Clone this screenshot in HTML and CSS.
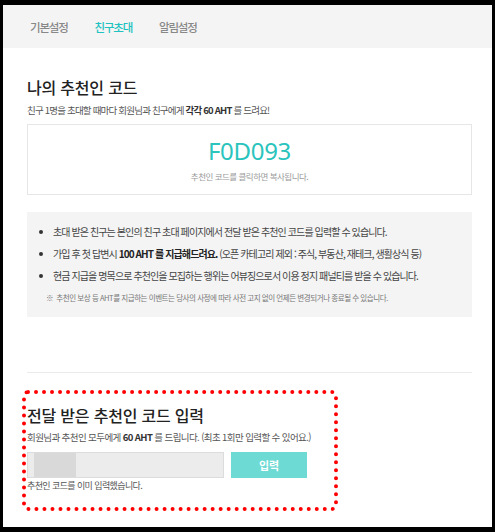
FILE: index.html
```html
<!DOCTYPE html>
<html lang="ko">
<head>
<meta charset="utf-8">
<title>친구초대</title>
<link rel="stylesheet" href="styles.css">
</head>
<body>
<div class="frame">
  <nav class="tabs">
    <span class="tab">기본설정</span>
    <span class="tab active">친구초대</span>
    <span class="tab">알림설정</span>
  </nav>
  <main class="content">
    <h2 class="title">나의 추천인 코드</h2>
    <p class="desc">친구 1명을 초대할 때마다 회원님과 친구에게 <b>각각 60 AHT</b> 를 드려요!</p>
    <div class="code-box">
      <div class="code">F0D093</div>
      <div class="code-hint">추천인 코드를 클릭하면 복사됩니다.</div>
    </div>
    <div class="info">
      <ul class="info-list">
        <li>초대 받은 친구는 본인의 친구 초대 페이지에서 전달 받은 추천인 코드를 입력할 수 있습니다.</li>
        <li>가입 후 첫 답변시 <b>100 AHT 를 지급해드려요.</b> (오픈 카테고리 제외 : 주식, 부동산, 재테크, 생활상식 등)</li>
        <li>현금 지급을 명목으로 추천인을 모집하는 행위는 어뷰징으로서 이용 정지 패널티를 받을 수 있습니다.</li>
      </ul>
      <p class="notice">※&nbsp; 추천인 보상 등 AHT를 지급하는 이벤트는 당사의 사정에 따라 사전 고지 없이 언제든 변경되거나 종료될 수 있습니다.</p>
    </div>
    <hr class="sep">
    <section class="enter">
      <h2 class="title">전달 받은 추천인 코드 입력</h2>
      <p class="desc">회원님과 추천인 모두에게 <b>60 AHT</b> 를 드립니다. (최초 1회만 입력할 수 있어요.)</p>
      <div class="form-row">
        <div class="input"><span class="mask"></span></div>
        <button class="btn" type="button">입력</button>
      </div>
      <p class="done">추천인 코드를 이미 입력했습니다.</p>
    </section>
  </main>
</div>
</body>
</html>
```
FILE: styles.css
```css
html, body {
  margin: 0;
  padding: 0;
  background: #000;
}
body {
  font-family: "Noto Sans CJK KR", "Noto Sans", sans-serif;
  color: #333;
}
.frame {
  margin: 5px 3px 0 3px;
  width: 489px;
  height: 522px;
  background: #fff;
  overflow: hidden;
}
.tabs {
  height: 43px;
  background: #f4f4f4;
  display: flex;
  align-items: center;
  padding-left: 27px;
  gap: 27px;
}
.tab {
  font-size: 11.5px;
  letter-spacing: -1.2px;
  color: #888;
  font-weight: 500;
}
.tab.active {
  color: #1fc2c0;
}
.content {
  padding: 29px 20px 0 24px;
}
.title {
  margin: 0;
  font-size: 16px;
  line-height: 20px;
  font-weight: 500;
  letter-spacing: -0.2px;
  color: #222;
}
.desc {
  margin: 6px 0 0;
  font-size: 9.5px;
  line-height: 14px;
  letter-spacing: -0.8px;
  color: #555;
}
.desc b {
  font-weight: 700;
  color: #333;
}
.code-box {
  margin-top: 7px;
  border: 1px solid #e6e6e6;
  padding: 11px 0 12px;
  text-align: center;
}
.code {
  font-family: "Noto Sans", sans-serif;
  font-size: 24px;
  line-height: 30px;
  color: #2ac4bd;
  letter-spacing: -0.3px;
}
.code-hint {
  margin-top: 4px;
  font-size: 8.5px;
  line-height: 12px;
  letter-spacing: -0.5px;
  color: #999;
}
.info {
  margin-top: 17px;
  background: #f4f4f4;
  padding: 9px 0 12px;
  height: 84px;
}
.info-list {
  list-style: none;
  margin: 0;
  padding: 0;
}
.info-list li {
  position: relative;
  padding-left: 26px;
  font-size: 10px;
  line-height: 22px;
  letter-spacing: -0.9px;
  color: #444;
}
.info-list li::before {
  content: "";
  position: absolute;
  left: 12px;
  top: 9px;
  width: 4px;
  height: 4px;
  border-radius: 50%;
  background: #333;
}
.info-list b {
  font-weight: 700;
  color: #222;
}
.notice {
  margin: 4px 0 0 19px;
  font-size: 7.5px;
  line-height: 14px;
  letter-spacing: -0.45px;
  color: #777;
}
.sep {
  margin: 55px 0 0;
  border: 0;
  border-top: 1px solid #ebebeb;
  height: 0;
}
.enter {
  margin: 17px 0 0 -5px;
  width: 307px;
  border: 4px dotted #f00;
  border-radius: 6px;
  padding: 11px 0 15px 1px;
}
.enter .desc {
  margin-top: 5px;
  letter-spacing: -0.6px;
}
.form-row {
  display: flex;
  gap: 7px;
  margin-top: 8px;
}
.input {
  box-sizing: border-box;
  width: 197px;
  height: 26px;
  border: 1px solid #dcdcdc;
  background: #ececec;
  display: flex;
  align-items: stretch;
  padding-left: 6px;
}
.mask {
  width: 42px;
  background: #d9d9d9;
}
.btn {
  width: 76px;
  height: 26px;
  border: 0;
  background: #6ddad4;
  color: #fff;
  font-family: "Noto Sans CJK KR", sans-serif;
  font-size: 11px;
  font-weight: 700;
  padding: 0;
}
.done {
  margin: 2px 0 0;
  font-size: 9px;
  line-height: 12px;
  letter-spacing: -0.6px;
  color: #555;
}
```
